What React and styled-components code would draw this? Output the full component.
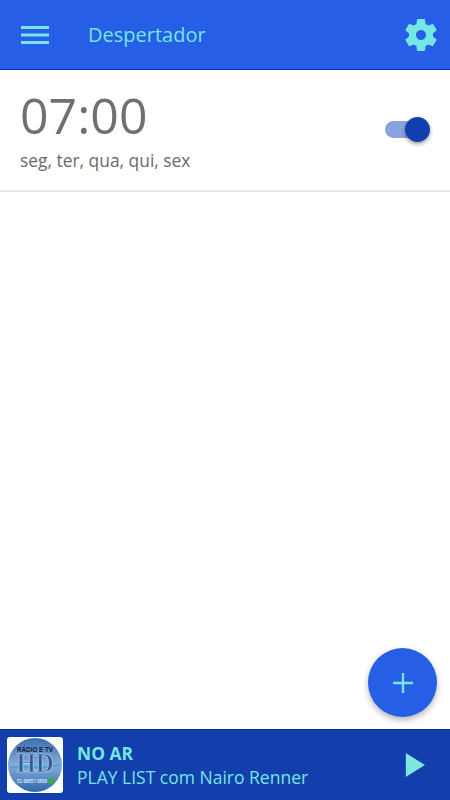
import React from 'react';
import styled, { createGlobalStyle } from 'styled-components';

const GlobalStyle = createGlobalStyle`
    html, body {
        margin: 0;
        padding: 0;
        background: #fff;
    }
    * {
        box-sizing: border-box;
    }
`;

const Screen = styled.div`
    width: 450px;
    height: 800px;
    display: flex;
    flex-direction: column;
    position: relative;
    overflow: hidden;
    font-family: 'Open Sans', sans-serif;
    background: #fff;
`;

const Header = styled.header`
    height: 70px;
    flex: none;
    display: flex;
    align-items: center;
    padding: 0 9px 0 21px;
    background: #265ee6;
    border-bottom: 1px solid #0a2fc0;
`;

const IconButton = styled.button`
    padding: 0;
    border: 0;
    background: none;
    display: flex;
    color: #74e6e3;
`;

const Title = styled.h1`
    flex: 1;
    margin: 0 0 0 39px;
    font-size: 20px;
    font-weight: 400;
    color: #74e6e3;
`;

const Content = styled.main`
    flex: 1;
`;

const AlarmRow = styled.div`
    height: 122px;
    display: flex;
    align-items: center;
    justify-content: space-between;
    padding: 0 20px;
    border-bottom: 2px solid #e6e6e6;
`;

const AlarmTime = styled.div`
    font-size: 50px;
    line-height: 68px;
    color: #707070;
    margin-top: -8px;
`;

const AlarmDays = styled.div`
    font-size: 17.4px;
    line-height: 22px;
    color: #6a6a6a;
`;

const Toggle = styled.div`
    width: 45px;
    height: 25px;
    position: relative;
    display: flex;
    align-items: center;
    margin-top: -2px;

    &::before {
        content: '';
        width: 38px;
        height: 17px;
        border-radius: 9px;
        background: #8aa2dd;
    }
`;

const Knob = styled.span`
    position: absolute;
    right: 0;
    top: 0;
    width: 25px;
    height: 25px;
    border-radius: 50%;
    background: #123fae;
    box-shadow: 0 2px 4px rgba(0, 0, 0, 0.4);
`;

const Fab = styled.button`
    position: absolute;
    left: 368px;
    top: 648px;
    width: 69px;
    height: 69px;
    padding: 0;
    border: 0;
    border-radius: 50%;
    display: flex;
    align-items: center;
    justify-content: center;
    background: #265ee6;
    color: #74e6e3;
    box-shadow: 0 3px 6px rgba(0, 0, 0, 0.3);
`;

const Player = styled.footer`
    height: 71px;
    flex: none;
    display: flex;
    align-items: center;
    padding: 0 24px 0 7px;
    background: #133fad;
    border-top: 1px solid #0a2a9a;
`;

const Logo = styled.div`
    width: 56px;
    height: 56px;
    flex: none;
    border-radius: 3px;
    background: #fff;
    display: flex;
    align-items: center;
    justify-content: center;
`;

const PlayerText = styled.div`
    flex: 1;
    margin-left: 14px;
`;

const OnAir = styled.div`
    font-size: 17.4px;
    line-height: 24px;
    font-weight: 700;
    color: #74e6e3;
`;

const Program = styled.div`
    font-size: 17.5px;
    line-height: 24px;
    color: #74e6e3;
`;

const LogoMark = () => (
    <svg width="54" height="54" viewBox="0 0 54 54">
        <defs>
            <linearGradient id="disc" x1="0" y1="0" x2="0" y2="1">
                <stop offset="0" stopColor="#3a6db2" />
                <stop offset="0.5" stopColor="#86acd8" />
                <stop offset="0.75" stopColor="#5b8cc4" />
                <stop offset="1" stopColor="#2f68ad" />
            </linearGradient>
        </defs>
        <circle cx="27" cy="27" r="27" fill="url(#disc)" />
        <path d="M2 30c12-5 20 3 50-3" fill="none" stroke="#3fa0d8" strokeWidth="1.5" />
        <text x="27" y="14" textAnchor="middle" fontFamily="'Liberation Sans', sans-serif" fontSize="7" fontWeight="700" fill="#0d1a3a" textLength="36" lengthAdjust="spacingAndGlyphs">RÁDIO E TV</text>
        <text x="27" y="34" textAnchor="middle" fontFamily="'Liberation Serif', serif" fontSize="27" fontWeight="700" fill="#2a5a9c" stroke="#cfe0f0" strokeWidth="0.6" textLength="37" lengthAdjust="spacingAndGlyphs">HD</text>
        <text x="24" y="45" textAnchor="middle" fontFamily="'Liberation Sans', sans-serif" fontSize="5.6" fill="#fff" textLength="30" lengthAdjust="spacingAndGlyphs">51-99657-6898</text>
        <rect x="40" y="40.5" width="6" height="5" fill="#3ea544" />
    </svg>
);

const App = () => {
    return (
        <Screen>
            <GlobalStyle />
            <Header>
                <IconButton>
                    <svg width="28" height="18" viewBox="0 0 28 18">
                        <path d="M0 1.5h28M0 9h28M0 16.5h28" stroke="currentColor" strokeWidth="3" />
                    </svg>
                </IconButton>
                <Title>Despertador</Title>
                <IconButton>
                    <svg width="40" height="40" viewBox="0 0 24 24" fill="currentColor">
                        <path fillRule="evenodd" d="M19.14 12.94c.04-.3.06-.61.06-.94 0-.32-.02-.64-.07-.94l2.03-1.58a.49.49 0 0 0 .12-.61l-1.92-3.32a.49.49 0 0 0-.59-.22l-2.39.96c-.5-.38-1.03-.7-1.62-.94l-.36-2.54a.48.48 0 0 0-.48-.41h-3.84c-.24 0-.43.17-.47.41l-.36 2.54c-.59.24-1.13.57-1.62.94l-2.39-.96c-.22-.08-.47 0-.59.22L2.74 8.87c-.12.21-.08.47.12.61l2.03 1.58c-.05.3-.09.63-.09.94s.02.64.07.94l-2.03 1.58a.49.49 0 0 0-.12.61l1.92 3.32c.12.22.37.29.59.22l2.39-.96c.5.38 1.03.7 1.62.94l.36 2.54c.05.24.24.41.48.41h3.84c.24 0 .44-.17.47-.41l.36-2.54c.59-.24 1.13-.56 1.62-.94l2.39.96c.22.08.47 0 .59-.22l1.92-3.32c.12-.22.07-.47-.12-.61l-2.01-1.58zM12 15c-1.65 0-3-1.35-3-3s1.35-3 3-3 3 1.35 3 3-1.35 3-3 3z" />
                    </svg>
                </IconButton>
            </Header>
            <Content>
                <AlarmRow>
                    <div>
                        <AlarmTime>07:00</AlarmTime>
                        <AlarmDays>seg, ter, qua, qui, sex</AlarmDays>
                    </div>
                    <Toggle>
                        <Knob />
                    </Toggle>
                </AlarmRow>
            </Content>
            <Fab>
                <svg width="20" height="20" viewBox="0 0 20 20">
                    <path d="M10 0v20M0 10h20" stroke="currentColor" strokeWidth="2.4" />
                </svg>
            </Fab>
            <Player>
                <Logo>
                    <LogoMark />
                </Logo>
                <PlayerText>
                    <OnAir>NO AR</OnAir>
                    <Program>PLAY LIST com Nairo Renner</Program>
                </PlayerText>
                <svg width="21" height="26" viewBox="0 0 21 26">
                    <path d="M0.5 0.5L20.5 13L0.5 25.5z" fill="#7fe8dc" stroke="#0a2fc0" strokeWidth="0.6" />
                </svg>
            </Player>
        </Screen>
    );
};

export default App;
